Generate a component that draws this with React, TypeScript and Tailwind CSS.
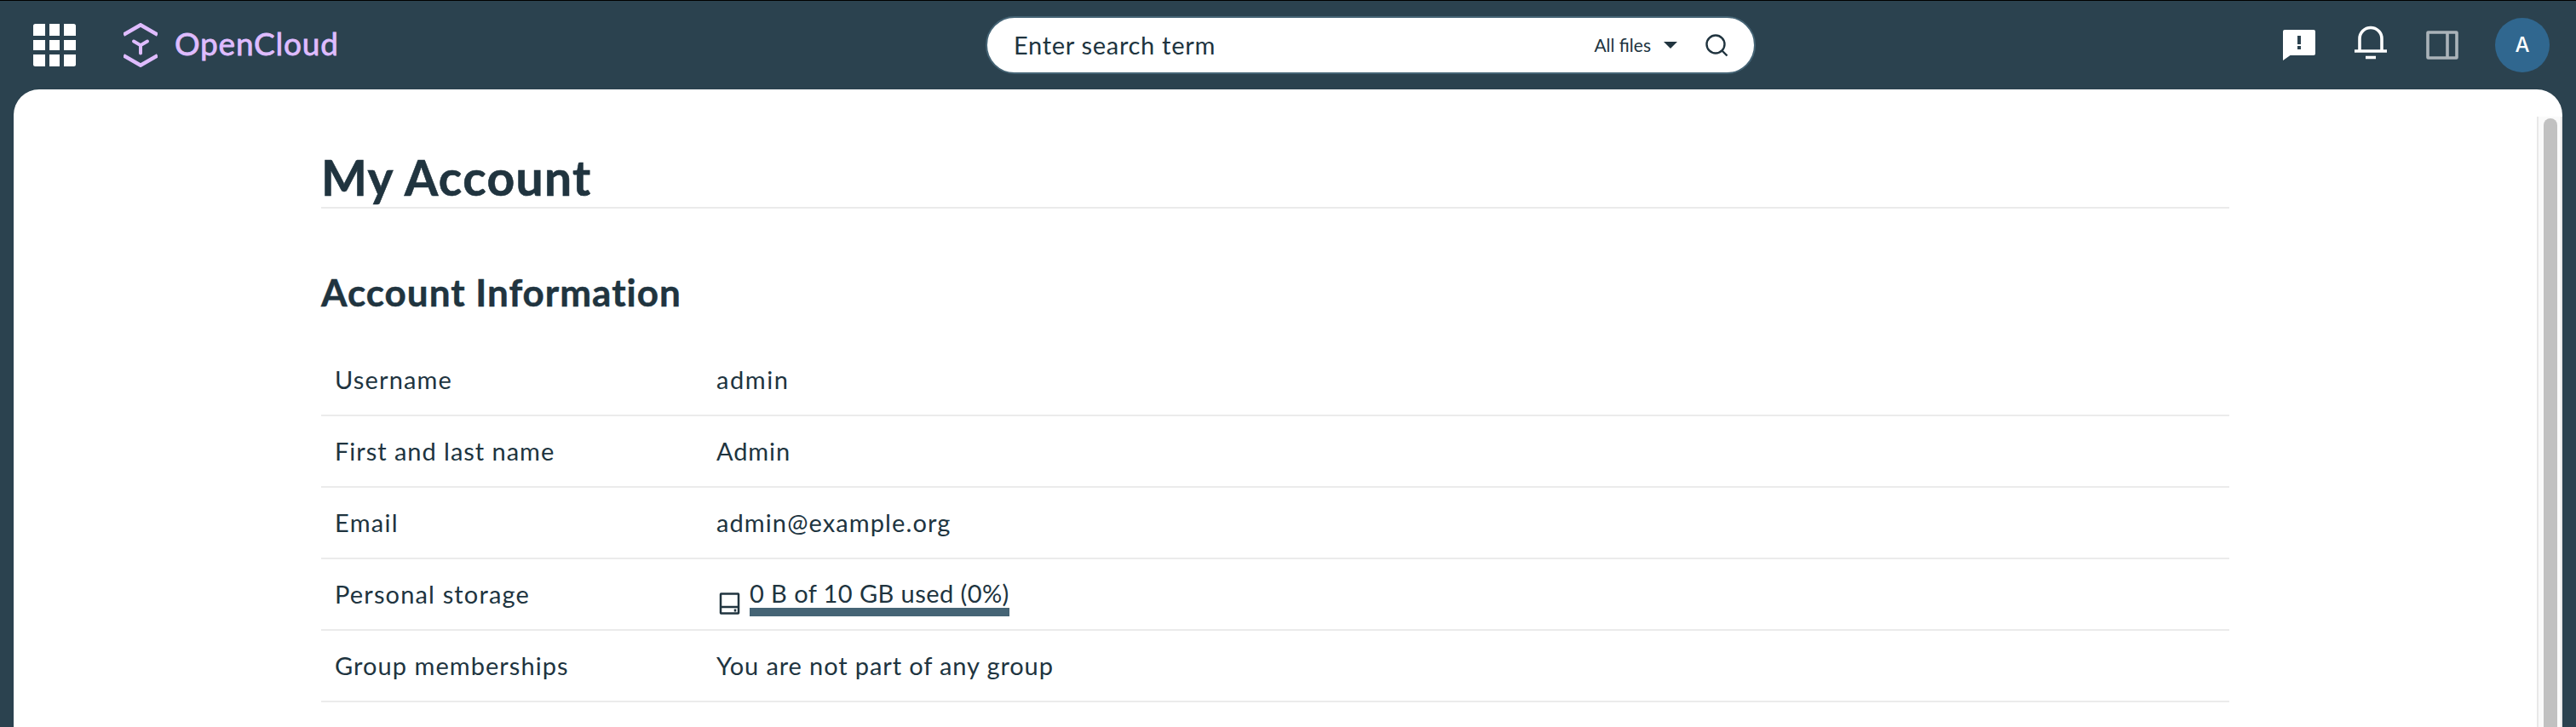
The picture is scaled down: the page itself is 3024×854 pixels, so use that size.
import React from "react";

const rows = [
  { label: "Username", ls: "tracking-[1.15px]", value: "admin", vs: "tracking-[1.6px]" },
  { label: "First and last name", ls: "tracking-[0.97px]", value: "Admin", vs: "tracking-[0.9px]" },
  { label: "Email", ls: "tracking-[1.3px]", value: "admin@example.org", vs: "tracking-[1.1px]" },
  { label: "Personal storage", ls: "tracking-[1.15px]", value: "", vs: "" },
  { label: "Group memberships", ls: "tracking-[1.05px]", value: "You are not part of any group", vs: "tracking-[0.88px]" },
];

function AppGrid() {
  return (
    <svg className="size-[50px]" viewBox="0 0 50 50" fill="#fff">
      <path d="M2.5 0H14V14H0V2.500Q0 0 2.500 0ZM19 0H31V14H19ZM36 0H47.500Q50 0 50 2.500V14H36ZM0 19H14V31H0ZM19 19H31V31H19ZM36 19H50V31H36ZM0 36H14V50H2.500Q0 50 0 47.500ZM19 36H31V50H19ZM36 36H50V47.500Q50 50 47.500 50H36Z" />
    </svg>
  );
}

function Logo() {
  return (
    <svg className="h-[52px] w-10" viewBox="0 0 40 52" fill="none" stroke="#dfbcff">
      <path d="M0 13.800 20 2.300 40 13.800M0 38.200 20 49.700 40 38.200" strokeWidth="4.500" />
      <path d="M12 21.500 20 26.200 28 21.500M20 26.200V35.500" strokeWidth="4" strokeLinecap="round" />
    </svg>
  );
}

export default function App() {
  return (
    <div className="flex h-[854px] w-[3024px] flex-col overflow-hidden border-t border-black bg-[#2b424f] font-['Lato','Noto_Sans',sans-serif] text-[#20343f]">
      <header className="grid h-[104px] shrink-0 grid-cols-[1157px_904px_1fr] items-center">
        <div className="flex items-center pl-[39px]">
          <AppGrid />
          <div className="ml-14">
            <Logo />
          </div>
          <span className="ml-5 pb-[5px] text-[37px] leading-none tracking-[0.8px] text-[#dfbcff] [-webkit-text-stroke:0.8px_#dfbcff]">OpenCloud</span>
        </div>
        <div className="flex h-[68px] items-center rounded-full border-2 border-[#456475] bg-white pl-[31px]">
          <span className="grow text-[29px] tracking-[0.7px]">Enter search term</span>
          <span className="text-[21px]">All files</span>
          <svg className="ml-[15px] h-2 w-4" viewBox="0 0 16 8" fill="#20343f">
            <path d="M0 0H16L8 8Z" />
          </svg>
          <svg className="mr-[30px] ml-[32px] size-7" viewBox="0 0 28 28" fill="none" stroke="#20343f" strokeWidth="2.400">
            <circle cx="13" cy="13" r="10.500" />
            <path d="M20 20 26.500 26.500" />
          </svg>
        </div>
        <div className="flex items-center justify-end pr-[31px]">
          <svg className="h-[36px] w-[38px]" viewBox="0 0 38 36" fillRule="evenodd" fill="#fff">
            <path d="M2 0H36Q38 0 38 2V28Q38 30 36 30H8.500L0 36V2Q0 0 2 0ZM17 7V17H21V7ZM17 19V23H21V19Z" />
          </svg>
          <svg className="mb-[6px] ml-[46px] h-[40px] w-[38px]" viewBox="0 0 38 40" fill="none" stroke="#fff" strokeWidth="3.600">
            <path d="M6 29V15.500A13 13 0 0 1 32 15.500V29M0 30H38M13 37.500H25" />
          </svg>
          <svg className="ml-[46px] h-[34px] w-[38px]" viewBox="0 0 38 34" fill="none" stroke="#aab3b9" strokeWidth="3.600">
            <rect x="2" y="2" width="34" height="30" rx="0.500" />
            <path d="M25 2V32" />
          </svg>
          <div className="ml-[43px] flex size-16 items-center justify-center rounded-full bg-[#30678f] font-['Inter',sans-serif] text-[24px] font-medium text-white">A</div>
        </div>
      </header>
      <main className="mx-4 flex grow rounded-t-[30px] bg-white pt-8">
        <div className="grow pr-[361px] pl-[361px]">
          <h1 className="h-[108px] border-b-2 border-[#ebebeb] pt-[35px] text-[57px] leading-[72px] font-bold tracking-[1.3px] [-webkit-text-stroke:0.6px_#20343f]">My Account</h1>
          <h2 className="mt-[70px] text-[44px] leading-[56px] font-bold tracking-[1px] [-webkit-text-stroke:0.5px_#20343f]">Account Information</h2>
          <dl className="mt-[34px] text-[29px]">
            {rows.map((r) => (
              <div key={r.label} className="grid h-[84px] grid-cols-[448px_1fr] items-center border-b-2 border-[#ebebeb] pl-4">
                <dt><span className={r.ls}>{r.label}</span></dt>
                <dd>
                  {r.value ? (
                    <span className={r.vs}>{r.value}</span>
                  ) : (
                    <span className="mt-[7px] flex items-end">
                      <svg className="mb-[2px] ml-[3px] size-[26px]" viewBox="0 0 26 26" fill="none" stroke="#20343f" strokeWidth="2.500">
                        <rect x="2" y="1.500" width="21" height="23" rx="0.500" />
                        <path d="M2 17H23M19 19.500V22.500" />
                      </svg>
                      <span className="ml-[10px] border-b-[10px] border-[#456475] leading-[34px] tracking-[0.43px]">0 B of 10 GB used (0%)</span>
                    </span>
                  )}
                </dd>
              </div>
            ))}
          </dl>
        </div>
        <div className="flex w-[30px] shrink-0 border-x-2 border-[#e8e8e8] bg-[#fafafa] pt-0.5 pl-1.5">
          <div className="h-full w-4 rounded-t-full bg-[#c1c1c1]" />
        </div>
      </main>
    </div>
  );
}
